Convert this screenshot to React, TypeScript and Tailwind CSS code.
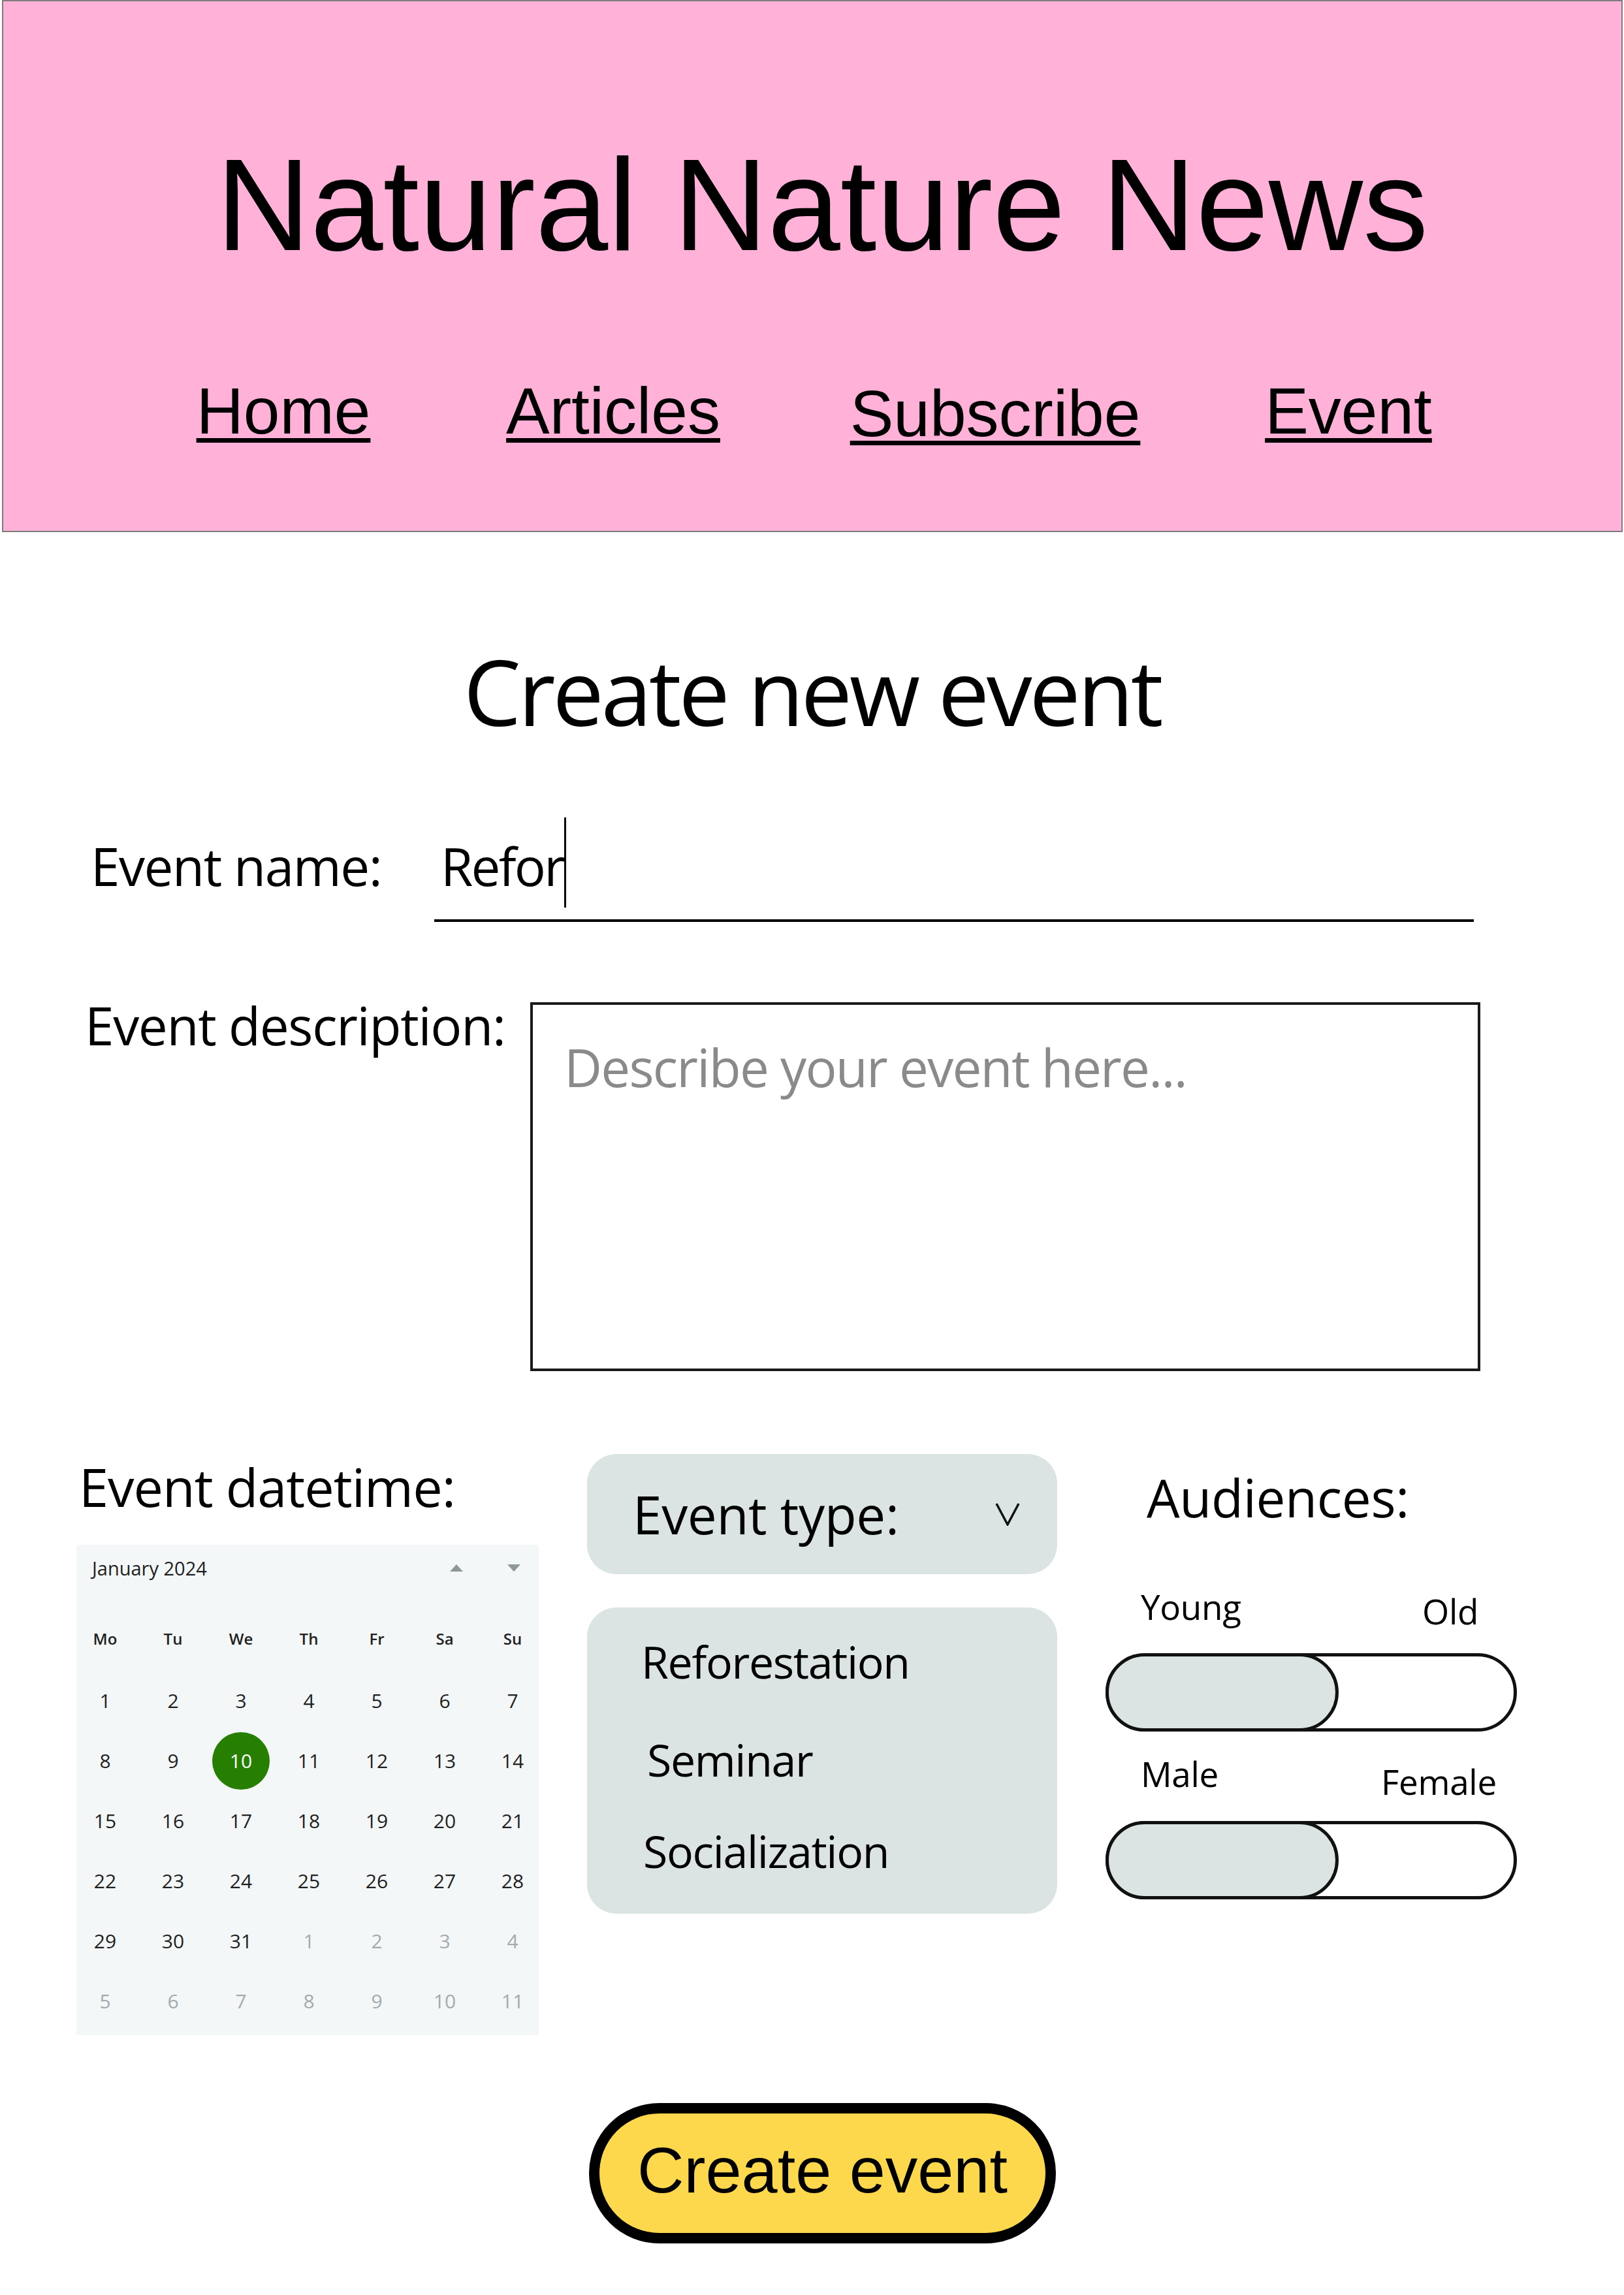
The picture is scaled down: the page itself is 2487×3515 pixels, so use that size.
const weekDays = ["Mo", "Tu", "We", "Th", "Fr", "Sa", "Su"];

// january 2024 starts on a monday, trailing days belong to february
const calendarRows: { day: number; muted?: boolean }[][] = [
  [1, 2, 3, 4, 5, 6, 7].map((d) => ({ day: d })),
  [8, 9, 10, 11, 12, 13, 14].map((d) => ({ day: d })),
  [15, 16, 17, 18, 19, 20, 21].map((d) => ({ day: d })),
  [22, 23, 24, 25, 26, 27, 28].map((d) => ({ day: d })),
  [
    { day: 29 },
    { day: 30 },
    { day: 31 },
    { day: 1, muted: true },
    { day: 2, muted: true },
    { day: 3, muted: true },
    { day: 4, muted: true },
  ],
  [5, 6, 7, 8, 9, 10, 11].map((d) => ({ day: d, muted: true })),
];

const navLinks = [
  { label: "Home", className: "ml-[179px]" },
  { label: "Articles", className: "ml-[5px]" },
  { label: "Subscribe", className: "ml-[85px] mt-[4px]" },
  { label: "Event", className: "ml-[41px]" },
];

function Calendar() {
  return (
    <div className="mt-[49px] h-[751px] w-[708px] bg-[#f4f7f8] font-['Open_Sans',sans-serif] tracking-normal text-[#1f1f1f]">
      <div className="flex h-[70px] items-center pl-[24px] pr-[28px]">
        <span className="text-[29px] font-medium leading-none">January 2024</span>
        <div className="flex-1" />
        <svg width="20" height="11" viewBox="0 0 20 11" className="fill-[#8e9799]">
          <polygon points="10,0 20,11 0,11" />
        </svg>
        <svg width="20" height="11" viewBox="0 0 20 11" className="ml-[68px] fill-[#8e9799]">
          <polygon points="0,0 20,0 10,11" />
        </svg>
      </div>

      <div className="-ml-[8px] mt-[28px] grid h-[92px] grid-cols-[repeat(7,104px)] items-center">
        {weekDays.map((d) => (
          <span key={d} className="text-center text-[24px] font-semibold leading-none">
            {d}
          </span>
        ))}
      </div>

      <div className="-ml-[8px] mt-[3px]">
        {calendarRows.map((row, i) => (
          <div key={i} className="grid h-[92px] grid-cols-[repeat(7,104px)] items-center">
            {row.map((cell, j) => {
              const selected = !cell.muted && cell.day === 10;
              return (
                <div key={j} className="flex justify-center">
                  {selected ? (
                    <span className="flex h-[88px] w-[88px] items-center justify-center rounded-full bg-[#267f00] text-[30px] leading-none text-white">
                      {cell.day}
                    </span>
                  ) : (
                    <span
                      className={
                        cell.muted
                          ? "text-[30px] leading-none text-[#a3abad]"
                          : "text-[30px] leading-none"
                      }
                    >
                      {cell.day}
                    </span>
                  )}
                </div>
              );
            })}
          </div>
        ))}
      </div>
    </div>
  );
}

function AudienceToggle() {
  return (
    <div className="relative h-[120px] w-[630px] rounded-full border-[5px] border-[#111] bg-white">
      <div className="absolute -left-[5px] -top-[5px] h-[120px] w-[357px] rounded-full border-[5px] border-[#111] bg-[#dce3e3]" />
    </div>
  );
}

export default function App() {
  return (
    <div className="h-[3515px] w-[2487px] overflow-hidden bg-white text-black">
      <header className="ml-[3px] h-[815px] w-[2482px] border-2 border-[#7d7d7d] bg-[#ffb1d8] font-['Liberation_Sans',Arial,sans-serif]">
        <h1 className="pl-[30px] pt-[212px] text-center text-[200px] leading-none">
          Natural Nature News
        </h1>
        <nav className="mt-[165px] flex items-start text-[100px] leading-none">
          {navLinks.map((link) => (
            <a
              key={link.label}
              href="#"
              className={`flex w-[500px] shrink-0 justify-center underline decoration-[length:7px] underline-offset-[7px] ${link.className}`}
            >
              {link.label}
            </a>
          ))}
        </nav>
      </header>

      <main className="font-['Open_Sans',sans-serif] tracking-[-0.02em]">
        <h2 className="mt-[173px] text-center text-[140px] leading-none tracking-[-0.032em]">
          Create new event
        </h2>

        <div className="ml-[139px] mt-[122px] flex items-baseline">
          <label className="w-[526px] shrink-0 text-[80px] leading-none tracking-[-0.018em]">Event name:</label>
          <div className="h-[162px] w-[1592px] border-b-4 border-black pl-[10px] pt-[36px] text-[80px] leading-none tracking-[-0.035em]">
            <span className="relative inline-block">
              Refor
              <span className="absolute left-full top-[-34px] ml-[1px] h-[138px] w-[3px] bg-black" />
            </span>
          </div>
        </div>

        <div className="ml-[130px] mt-[118px] flex items-start">
          <label className="w-[682px] shrink-0 text-[80px] leading-none tracking-[-0.016em]">Event description:</label>
          <div className="mt-[5px] h-[565px] w-[1455px] border-4 border-[#1a1a1a] pl-[48px] pt-[55px] text-[80px] leading-none tracking-[-0.022em] text-[#8a8a8a]">
            Describe your event here...
          </div>
        </div>

        <div className="mt-[127px] flex items-start">
          <section className="ml-[117px] w-[708px] shrink-0">
            <h3 className="mt-[9px] pl-[4px] text-[81px] font-normal leading-none tracking-[-0.012em]">
              Event datetime:
            </h3>
            <Calendar />
          </section>

          <section className="ml-[74px] w-[720px] shrink-0">
            <div className="flex h-[184px] items-center justify-between rounded-[45px] bg-[#dce3e3] pl-[70px] pr-[57px]">
              <span className="text-[80px] leading-none">Event type:</span>
              <svg width="38" height="36" viewBox="0 0 38 36" fill="none" stroke="#111" strokeWidth="3.5">
                <polyline points="2,2 19,34 36,2" />
              </svg>
            </div>
            <div className="mt-[51px] h-[469px] rounded-[45px] bg-[#dce3e3] pt-[49px] text-[68px] leading-none tracking-[-0.02em]">
              <div className="pl-[83px]">Reforestation</div>
              <div className="mt-[82px] pl-[92px]">Seminar</div>
              <div className="mt-[72px] pl-[86px]">Socialization</div>
            </div>
          </section>

          <section className="ml-[74px] w-[630px] shrink-0">
            <h3 className="mt-[26px] pl-[63px] text-[80px] font-normal leading-none">Audiences:</h3>
            <div className="mt-[101px] flex items-start pl-[54px] text-[53px] leading-none">
              <span className="w-[431px] shrink-0">Young</span>
              <span className="mt-[7px]">Old</span>
            </div>
            <div className="mt-[38px]">
              <AudienceToggle />
            </div>
            <div className="mt-[38px] flex items-start pl-[54px] text-[53px] leading-none">
              <span className="w-[368px] shrink-0">Male</span>
              <span className="mt-[12px]">Female</span>
            </div>
            <div className="mt-[34px]">
              <AudienceToggle />
            </div>
          </section>
        </div>

        <button
          type="button"
          className="ml-[902px] mt-[104px] flex h-[215px] w-[715px] items-center justify-center rounded-full border-[16px] border-black bg-[#fdd84c] pb-[10px] font-['Liberation_Sans',Arial,sans-serif] text-[99px] leading-none tracking-normal"
        >
          Create event
        </button>
      </main>
    </div>
  );
}
